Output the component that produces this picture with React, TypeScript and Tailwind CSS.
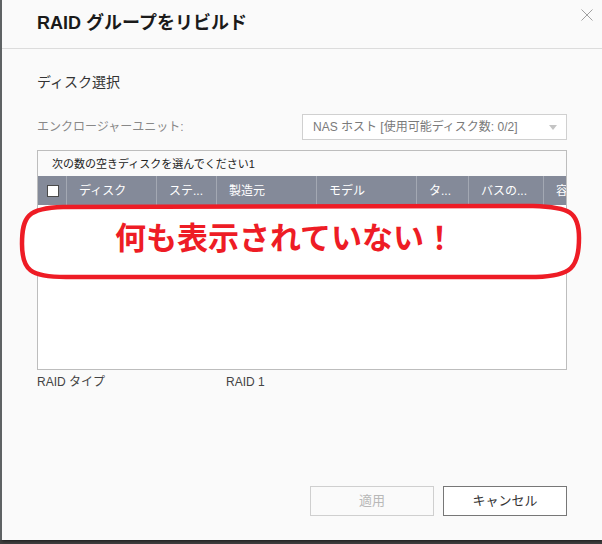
import React from "react";

const FONT = '"Liberation Sans", "Noto Sans CJK JP", sans-serif';

const cols: { w: number; label: string }[] = [
  { w: 90, label: "ディスク" },
  { w: 60, label: "ステ..." },
  { w: 100, label: "製造元" },
  { w: 100, label: "モデル" },
  { w: 52, label: "タ..." },
  { w: 75, label: "バスの..." },
  { w: 60, label: "容量" },
];

export default function App() {
  return (
    <div
      className="relative w-[602px] h-[544px] bg-[#3f3f3f] overflow-hidden"
      style={{ fontFamily: FONT }}
    >
      <div className="absolute left-0 top-0 w-[2px] h-[540px] bg-[#5e6264]" />
      <div className="ml-[2px] w-[600px] h-[540px] bg-[#fafafa] flex flex-col shadow-[0_1px_3px_rgba(0,0,0,0.6)]">
        {/* header */}
        <div className="relative h-[49px] border-b border-[#dcdcdc] flex items-center pl-[35px] shrink-0">
          <div className="text-[18px] leading-[24px] font-semibold text-[#1a1a1a] mt-[-2px]">
            RAID グループをリビルド
          </div>
          <svg
            className="absolute left-[579px] top-[9px]"
            width="12"
            height="12"
            viewBox="0 0 12 12"
          >
            <path d="M0.5 0.5 L11.5 11.5 M11.5 0.5 L0.5 11.5" stroke="#a0a0a0" strokeWidth="1" fill="none" />
          </svg>
        </div>

        {/* body */}
        <div className="flex-1 flex flex-col px-[35px]">
          <div className="mt-[23px] text-[14px] leading-[20px] text-[#333]">ディスク選択</div>

          <div className="mt-[22px] flex items-center h-[26px]">
            <div className="text-[12px] leading-[16px] text-[#888]">エンクロージャーユニット:</div>
            <div className="ml-auto w-[265px] h-[26px] bg-white border border-[#d0d0d0] flex items-center pl-[10px] pr-[9px]">
              <span className="text-[12px] leading-[16px] text-[#7a7a7a] whitespace-nowrap">
                NAS ホスト [使用可能ディスク数: 0/2]
              </span>
              <span className="ml-auto w-0 h-0 border-x-[4px] border-t-[5px] border-x-transparent border-t-[#c4c4c4]" />
            </div>
          </div>

          <div className="mt-[10px] h-[220px] border border-[#bdbdbd] bg-white flex flex-col overflow-hidden">
            <div className="h-[25px] bg-[#fafafa] flex items-center pl-[14px] shrink-0">
              <span className="text-[11px] leading-[14px] text-[#222] whitespace-nowrap">
                次の数の空きディスクを選んでください1
              </span>
            </div>
            <div className="h-[29px] bg-[#848a99] flex shrink-0 whitespace-nowrap">
              <div className="w-[29px] shrink-0 flex items-center pl-[9px] border-r border-[#a3a8b3]">
                <div className="w-[12px] h-[12px] bg-white border border-[#4a4a4a]" />
              </div>
              {cols.map((c, i) => (
                <div
                  key={i}
                  className={
                    "shrink-0 flex items-center pl-[12px] text-[12px] text-white" +
                    (i < cols.length - 1 ? " border-r border-[#a3a8b3]" : "")
                  }
                  style={{ width: c.w }}
                >
                  {c.label}
                </div>
              ))}
            </div>
            <div className="flex-1 bg-white" />
          </div>

          <div className="mt-[4px] flex text-[12px] leading-[16px] text-[#444]">
            <span className="w-[189px]">RAID タイプ</span>
            <span>RAID 1</span>
          </div>

          <div className="mt-auto mb-[24px] flex justify-end gap-[9px]">
            <div className="w-[124px] h-[30px] border border-[#cfcfcf] bg-[#fafafa] flex items-center justify-center text-[13px] text-[#b8b8b8]">
              適用
            </div>
            <div className="w-[124px] h-[30px] border border-[#777] bg-white flex items-center justify-center text-[13px] text-[#333]">
              キャンセル
            </div>
          </div>
        </div>
      </div>

      {/* red annotation overlay */}
      <div className="absolute left-[18px] top-[202px] w-[566px] h-[80px]">
        <svg className="absolute inset-0" width="566" height="80" viewBox="0 0 566 80">
          <path
            d="M45 5 L515 4 C552 5 561 10 561 36 C561 66 553 74 518 75 L48 75 C12 75 4 68 4 42 C4 14 10 6 45 5 Z"
            fill="#ffffff"
            stroke="#ee1c25"
            strokeWidth="4.5"
            strokeLinejoin="round"
          />
        </svg>
        <div className="absolute left-[97px] top-[17px] text-[31px] leading-[40px] font-bold text-[#ee1c25] whitespace-nowrap">
          何も表示されていない！
        </div>
      </div>
    </div>
  );
}
